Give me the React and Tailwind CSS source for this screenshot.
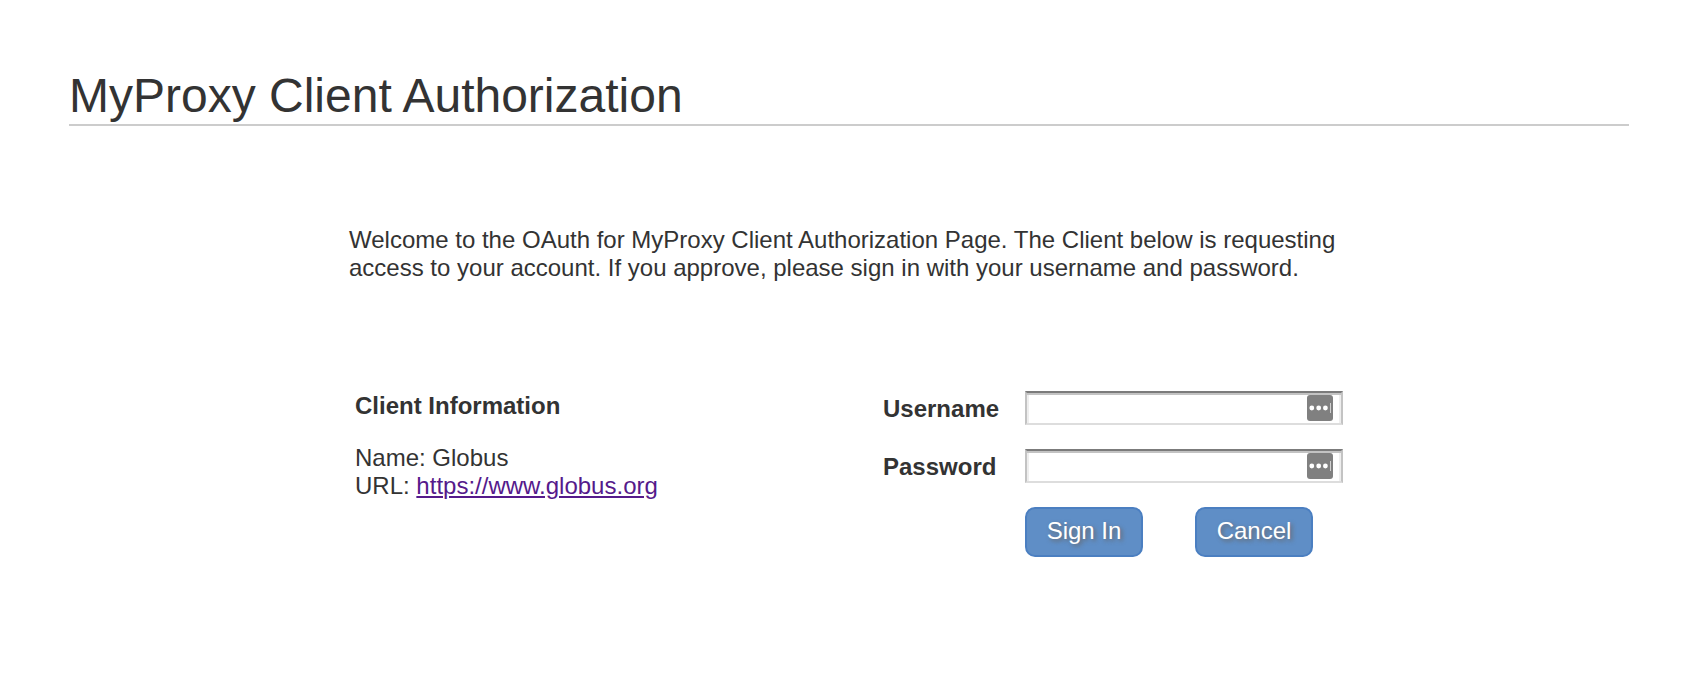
import React from "react";

function FieldIcon() {
  return (
    <svg
      className="pointer-events-none absolute right-2.5 top-1 size-[26px]"
      viewBox="0 0 26 26"
      aria-hidden="true"
    >
      <rect width="26" height="26" rx="3" fill="#808080" />
      <circle cx="4.8" cy="13" r="2.4" fill="#fff" />
      <circle cx="11.7" cy="13" r="2.4" fill="#fff" />
      <circle cx="18.4" cy="13" r="2.4" fill="#fff" />
      <rect x="23" y="8" width="1" height="10" fill="#d0d0d0" />
    </svg>
  );
}

function Field({ id, label, type }) {
  return (
    <>
      <label htmlFor={id} className="pt-0.5 font-bold">
        {label}
      </label>
      <div className="relative">
        <input
          id={id}
          name={id}
          type={type}
          className="block h-[34px] w-full border-2 border-t-[#7b7b7b] border-r-[#c3c3c3] border-b-[#dddddd] border-l-[#c3c3c3] bg-white pl-2 pr-10 text-2xl/7 shadow-[inset_0_2px_0_#c3c3c3,inset_2px_0_0_#eeeeee,inset_-2px_0_0_#eeeeee] outline-none"
        />
        <FieldIcon />
      </div>
    </>
  );
}

function ActionButton({ type, children }) {
  return (
    <button
      type={type}
      className="h-[50px] w-[118px] cursor-pointer rounded-[10px] border-2 border-[#4b7fc1] bg-[#5f8ec6] pb-0.5 text-2xl/7 text-white [text-shadow:2px_2px_4px_#666666]"
    >
      {children}
    </button>
  );
}

export default function App() {
  return (
    <div className="min-h-screen bg-white pl-[69px] pr-[71px] pt-[68px] pb-20 font-['Liberation_Sans',Arial,sans-serif] text-2xl/7 text-[#333333]">
      <h1 className="border-b-2 border-[#cccccc] text-5xl/[56px]">
        MyProxy Client Authorization
      </h1>
      <main className="mx-auto max-w-[1000px] pt-[100px]">
        <p>
          Welcome to the OAuth for MyProxy Client Authorization Page. The Client
          below is requesting access to your account. If you approve, please
          sign in with your username and password.
        </p>
        <div className="flex items-start justify-between px-1.5 pt-[109px]">
          <section className="pt-px">
            <h2 className="font-bold">Client Information</h2>
            <p className="mt-6">
              Name: Globus
              <br />
              URL:{" "}
              <a
                href="https://www.globus.org"
                className="text-[#551a8b] underline decoration-2 underline-offset-2"
              >
                https://www.globus.org
              </a>
            </p>
          </section>
          <form
            className="grid grid-cols-[142px_318px] items-center gap-y-6"
            onSubmit={(event) => event.preventDefault()}
          >
            <Field id="username" label="Username" type="text" />
            <Field id="password" label="Password" type="password" />
            <div className="col-start-2 flex gap-[52px]">
              <ActionButton type="submit">Sign In</ActionButton>
              <ActionButton type="button">Cancel</ActionButton>
            </div>
          </form>
        </div>
      </main>
    </div>
  );
}
